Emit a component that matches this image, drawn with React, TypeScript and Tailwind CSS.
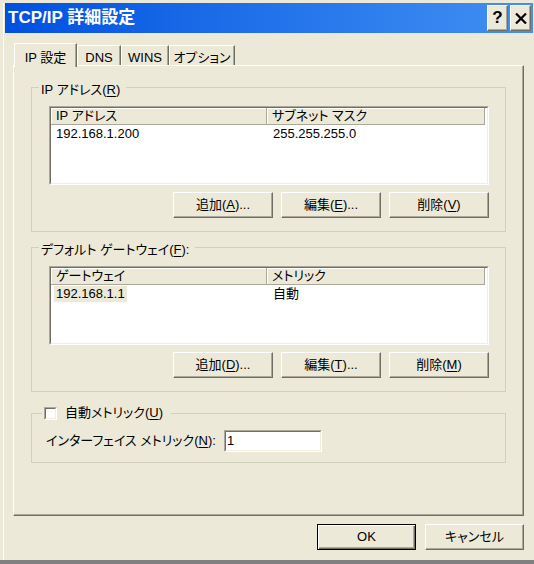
import type { ReactNode } from "react";

const raised =
  "border border-t-white border-l-white border-r-[#716f64] border-b-[#716f64] shadow-[inset_-1px_-1px_0_#aca899]";
const sunken = "border border-t-[#aca899] border-l-[#aca899] border-r-white border-b-white";
const sunkenInner = "border border-t-[#716f64] border-l-[#716f64] border-r-[#f1efe2] border-b-[#f1efe2]";

type Row = { a: string; b: string; selected?: boolean };

function U({ children }: { children: string }) {
  return <span className="underline underline-offset-2">{children}</span>;
}

function Button({
  children,
  className = "w-[100px]",
  primary = false,
}: {
  children: ReactNode;
  className?: string;
  primary?: boolean;
}) {
  return (
    <div
      className={`flex h-[26px] items-center justify-center bg-[#ece9d8] ${className} ${
        primary
          ? "border border-black shadow-[inset_1px_1px_0_white,inset_-1px_-1px_0_#716f64,inset_-2px_-2px_0_#aca899]"
          : raised
      }`}
    >
      {children}
    </div>
  );
}

function ListView({ cols, row }: { cols: [string, string]; row: Row }) {
  return (
    <div className={`h-[79px] ${sunken}`}>
      <div className={`h-full bg-white ${sunkenInner}`}>
        <div className="flex h-[17px]">
          {cols.map((c, i) => (
            <div
              key={c}
              className={`flex items-center pl-[5px] ${
                i === 0 ? "w-[216px]" : "w-[218px]"
              } border-r border-b border-r-[#aca899] border-b-[#aca899] bg-[#ece9d8] shadow-[inset_1px_1px_0_white]`}
            >
              {c}
            </div>
          ))}
        </div>
        <div className="flex h-[17px] items-center">
          <div className="w-[216px] pl-[3px]">
            <span className={`inline-block px-[2px] leading-[16px] ${row.selected ? "bg-[#ece9d8]" : ""}`}>
              {row.a}
            </span>
          </div>
          <div className="pl-[6px]">{row.b}</div>
        </div>
      </div>
    </div>
  );
}

function AddressGroup({
  title,
  cols,
  row,
  keys,
  className = "",
}: {
  title: ReactNode;
  cols: [string, string];
  row: Row;
  keys: [string, string, string];
  className?: string;
}) {
  return (
    <fieldset className={`border border-[#d0d0bf] ${className}`}>
      <legend className="ml-[7px] pt-[6px] pr-[6px] pl-[2px] leading-[14px]">{title}</legend>
      <div className="pt-[9px] pr-[16px] pb-[13px] pl-[17px]">
        <ListView cols={cols} row={row} />
        <div className="mt-[7px] flex justify-end gap-[8px]">
          <Button>
            追加(<U>{keys[0]}</U>)...
          </Button>
          <Button>
            編集(<U>{keys[1]}</U>)...
          </Button>
          <Button>
            削除(<U>{keys[2]}</U>)
          </Button>
        </div>
      </div>
    </fieldset>
  );
}

const tabs = [
  { label: "IP 設定", w: "w-[63px]", active: true },
  { label: "DNS", w: "w-[44px]", active: false },
  { label: "WINS", w: "w-[48px]", active: false },
  { label: "オプション", w: "w-[66px]", active: false },
];

export default function App() {
  return (
    <div className="flex h-[564px] w-[534px] flex-col bg-[#808080] font-['Liberation_Sans','Noto_Sans_CJK_JP',sans-serif] text-[13px] text-black [font-feature-settings:'palt']">
      <div className="flex h-[560px] bg-[#ece9d8] pt-[3px] pr-px pl-[3px]">
        <div className="flex flex-1 flex-col border-l border-white pl-px">
          {/* caption */}
          <div className="flex h-[30px] items-center bg-linear-to-r from-[#0050e0] to-[#4190f3] pr-[2px] pl-[3px]">
            <span className="flex-1 text-[17px] font-bold text-white">TCP/IP 詳細設定</span>
            <div className="flex gap-[2px]">
              <div
                className={`flex h-[26px] w-[21px] items-center justify-center bg-[#ece9d8] text-[17px] font-bold ${raised}`}
              >
                ?
              </div>
              <div className={`flex h-[26px] w-[21px] items-center justify-center bg-[#ece9d8] ${raised}`}>
                <svg width="12" height="11" viewBox="0 0 12 11">
                  <path d="M1 0.5 L11 10.5 M11 0.5 L1 10.5" stroke="black" strokeWidth="2.2" />
                </svg>
              </div>
            </div>
          </div>

          <div className="flex flex-col pr-[9px] pl-[8px]">
            {/* tabs */}
            <div className="relative z-10 mt-[10px] -mb-[2px] flex h-[24px] items-end pl-px">
              {tabs.map((t) => (
                <div
                  key={t.label}
                  className={`flex justify-center border-t border-r border-l border-t-white border-r-[#716f64] border-l-white bg-[#ece9d8] shadow-[inset_-1px_0_0_#aca899] ${
                    t.w
                  } ${t.active ? "h-[24px] pt-[4px]" : "mb-[2px] h-[20px] pt-[2px]"}`}
                >
                  {t.label}
                </div>
              ))}
            </div>

            {/* panel */}
            <div className="flex h-[451px] flex-col border border-t-white border-l-white border-r-[#716f64] border-b-[#716f64] px-[17px] pt-[11px] shadow-[inset_-1px_-1px_0_#aca899]">
              <AddressGroup
                title={
                  <>
                    IP アドレス(<U>R</U>)
                  </>
                }
                cols={["IP アドレス", "サブネット マスク"]}
                row={{ a: "192.168.1.200", b: "255.255.255.0" }}
                keys={["A", "E", "V"]}
              />
              <AddressGroup
                className="mt-[5px]"
                title={
                  <>
                    デフォルト ゲートウェイ(<U>F</U>):
                  </>
                }
                cols={["ゲートウェイ", "メトリック"]}
                row={{ a: "192.168.1.1", b: "自動", selected: true }}
                keys={["D", "T", "M"]}
              />

              <fieldset className="mt-[14px] border border-[#d0d0bf]">
                <legend className="ml-[10px] pr-[8px] pl-[2px] leading-[14px]">
                  <div className="flex items-center gap-[8px]">
                    <div className={`h-[13px] w-[13px] ${sunken}`}>
                      <div className={`h-full w-full bg-white ${sunkenInner}`} />
                    </div>
                    <span>
                      自動メトリック(<U>U</U>)
                    </span>
                  </div>
                </legend>
                <div className="flex items-center pt-[10px] pb-[10px] pl-[14px]">
                  <span className="w-[178px] whitespace-nowrap">
                    インターフェイス メトリック(<U>N</U>):
                  </span>
                  <div className={`h-[22px] w-[98px] ${sunken}`}>
                    <div className={`flex h-full items-center bg-white pl-px ${sunkenInner}`}>1</div>
                  </div>
                </div>
              </fieldset>
            </div>

            {/* dialog buttons */}
            <div className="mt-[8px] flex justify-end gap-[9px]">
              <Button className="w-[99px]" primary>
                OK
              </Button>
              <Button className="w-[99px]">キャンセル</Button>
            </div>
          </div>
        </div>
      </div>
    </div>
  );
}
